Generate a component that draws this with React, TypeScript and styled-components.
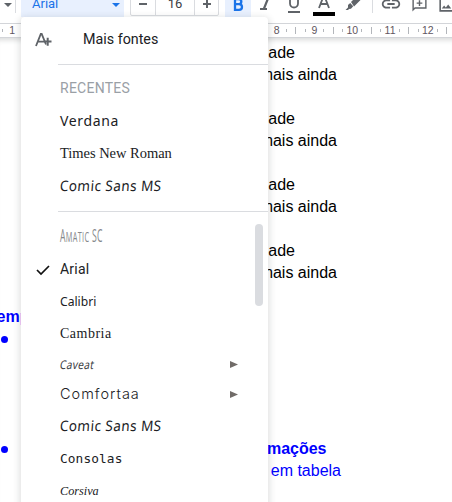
import React from "react";
import styled, { createGlobalStyle } from "styled-components";

const Global = createGlobalStyle`
  * { box-sizing: border-box; }
  body { margin: 0; background: #fff; overflow: hidden; }
`;

const Page = styled.main`
  position: relative;
  width: 452px;
  height: 502px;
  overflow: hidden;
  background: #fff;
`;

const Toolbar = styled.header`
  display: flex;
  height: 23px;
  overflow: hidden;
  font-family: Roboto, "Liberation Sans", sans-serif;
`;

const Tools = styled.div`
  display: flex;
  flex: none;
  height: 26px;
  margin-top: -9px;
`;

const Slot = styled.div<{ $w: number; $active?: boolean; $drop?: number }>`
  display: flex;
  flex: none;
  align-items: center;
  justify-content: center;
  width: ${(p) => p.$w}px;
  padding-top: ${(p) => p.$drop || 0}px;
  background: ${(p) => (p.$active ? "#e8f0fe" : "transparent")};
`;

const Separator = styled.div<{ $gap: number }>`
  flex: none;
  width: 1px;
  height: 22px;
  margin-right: ${(p) => p.$gap}px;
  background: #dadce0;
`;

const FontPicker = styled.div`
  display: flex;
  flex: none;
  align-items: center;
  justify-content: space-between;
  width: 103px;
  margin-right: 6px;
  padding: 0 4px 0 11px;
  background: #e8f0fe;
  color: #1a73e8;
  font-size: 14px;
  line-height: 26px;
`;

const PickerLabel = styled.span`
  font-size: 13px;
  margin-top: -1px;
`;

const CaretBox = styled.span`
  margin-top: 2px;
`;

const SizeStepper = styled.div`
  display: flex;
  flex: none;
  width: 89px;
  height: 25px;
  margin-right: 6px;
  border: 1px solid #dadce0;
  border-radius: 2px;
`;

const SizeValue = styled.span`
  flex: 1;
  border: solid #dadce0;
  border-width: 0 1px;
  color: #3c4043;
  font-size: 13px;
  line-height: 24px;
  text-align: center;
`;

const Icon = styled.svg`
  display: block;
  flex: none;
  overflow: visible;
`;

const Ruler = styled.div`
  display: flex;
  height: 15px;
  border: solid #d3d5d9;
  border-width: 1px 0;
  overflow: hidden;
`;

const RulerUnit = styled.div`
  display: grid;
  flex: none;
  grid-template-columns: repeat(4, 9.45px);
  align-items: center;
  justify-items: center;
  width: 37.8px;
  &:first-child { margin-left: -11.5px; }
`;

const Tick = styled.i<{ $h: number }>`
  width: 1px;
  height: ${(p) => p.$h}px;
  background: #b3b6bb;
`;

const Mark = styled.span`
  display: flex;
  justify-content: center;
  width: 9px;
  color: #5f5660;
  font: 10.5px/13px "Liberation Sans", sans-serif;
`;

const Doc = styled.article`
  display: grid;
  grid-template-columns: 21px 1fr;
  grid-auto-rows: 22px;
  height: 464px;
  padding-top: 4px;
  box-shadow: inset 0 6px 5px -4px rgba(60, 64, 67, 0.2);
  overflow: hidden;
  font: 16px/22px "Liberation Sans", sans-serif;
`;

const Margin = styled.div`
  display: flex;
  align-items: center;
  color: #00f;
  font-weight: bold;
  white-space: nowrap;
  text-indent: -3.5px;
`;

const Bullet = styled.i`
  width: 7px;
  height: 7px;
  margin: 1px 0 0 1px;
  border-radius: 50%;
  background: #00f;
`;

const Line = styled.p<{ $right: number; $blue?: boolean; $bold?: boolean }>`
  margin: 0;
  padding-right: ${(p) => 452 - p.$right}px;
  color: ${(p) => (p.$blue ? "#00f" : "#000")};
  font-weight: ${(p) => (p.$bold ? 700 : 400)};
  text-align: right;
  white-space: nowrap;
`;

const Menu = styled.nav`
  position: absolute;
  top: 17px;
  left: 21px;
  width: 247px;
  height: 500px;
  padding-top: 6px;
  border-radius: 4px;
  background: #fff;
  box-shadow: 0 2px 6px 2px rgba(60, 64, 67, 0.15);
`;

const MoreFonts = styled.div`
  display: flex;
  align-items: center;
  height: 32px;
  padding-left: 14px;
  color: #202124;
  font: 14.3px Roboto, sans-serif;
`;

const MoreLabel = styled.span`
  margin-left: 31px;
`;

const Divider = styled.hr<{ $top: number; $bottom: number }>`
  height: 1px;
  margin: ${(p) => p.$top}px 0 ${(p) => p.$bottom}px 37px;
  border: 0;
  background: #dadce0;
`;

const Row = styled.div<{ $h: number }>`
  display: grid;
  grid-template-columns: 39px 1fr 39px;
  align-items: center;
  height: ${(p) => p.$h}px;
  white-space: nowrap;
`;

const CheckCell = styled.span`
  grid-column: 1;
  padding: 3px 0 0 15px;
`;

const Face = styled.span<{
  $font: string; $size: number; $track?: number; $color?: string; $weight?: number;
  $italic?: boolean; $squeeze?: number; $skew?: number; $shift?: number;
}>`
  grid-column: 2;
  justify-self: start;
  color: ${(p) => p.$color || "#202124"};
  font-family: ${(p) => p.$font};
  font-size: ${(p) => p.$size}px;
  font-style: ${(p) => (p.$italic ? "italic" : "normal")};
  font-weight: ${(p) => p.$weight || 400};
  letter-spacing: ${(p) => p.$track || 0}px;
  line-height: 20px;
  transform: translateY(${(p) => p.$shift || 0}px) scaleX(${(p) => p.$squeeze || 1}) skewX(${(p) => p.$skew || 0}deg);
  transform-origin: left;
`;

const SmallCaps = styled.span`
  font-size: 0.85em;
`;

const ArrowCell = styled.span`
  grid-column: 3;
  padding-left: 1px;
`;

const Scrollbar = styled.div`
  position: absolute;
  top: 207px;
  right: 5px;
  width: 8px;
  height: 82px;
  border-radius: 4px;
  background: #dadce0;
`;

const Caret = ({ color }: { color: string }) => (
  <CaretBox><Icon width="8" height="4"><path d="M0 0h8L4 4z" fill={color} /></Icon></CaretBox>
);
const Glyph = ({ d, size = 20 }: { d: string; size?: number }) => (
  <Icon width={size} height={size} viewBox="0 0 24 24"><path d={d} fill="#5f6368" /></Icon>
);

const sans = '"Noto Sans", sans-serif';

type Entry = {
  name: string; h: number; font: string; size: number; track?: number; italic?: boolean; weight?: number;
  squeeze?: number; skew?: number; color?: string; checked?: boolean; more?: boolean; shift?: number;
};

const comic: Entry = { name: "Comic Sans MS", h: 32.5, font: sans, size: 14.5, squeeze: 0.93, track: 0.5, skew: -5, shift: -1 };

const recents: Entry[] = [
  { name: "Verdana", h: 32.5, font: sans, size: 14, track: 0.65 },
  { name: "Times New Roman", h: 32.5, font: '"Liberation Serif", serif', size: 14.5, track: -0.03 },
  comic,
];

const fonts: Entry[] = [
  { name: "Amatic SC", h: 32.5, font: '"Open Sans", sans-serif', size: 18, squeeze: 0.48, weight: 400, track: 0.7, color: "#85878b", shift: -1 },
  { name: "Arial", h: 32.5, font: "Roboto, sans-serif", size: 14, track: 0.2, checked: true },
  { name: "Calibri", h: 32.5, font: sans, size: 12.5, squeeze: 0.97, shift: 1 },
  { name: "Cambria", h: 32.5, font: '"Liberation Serif", serif', size: 14, track: 0.5 },
  { name: "Caveat", h: 29.5, font: sans, size: 12, squeeze: 0.85, track: 0.3, skew: -12, more: true, color: "#3c4043" },
  { name: "Comfortaa", h: 30.5, font: "Inter, sans-serif", size: 14.5, weight: 300, track: 1, more: true, shift: -1 },
  comic,
  { name: "Consolas", h: 32.5, font: '"DejaVu Sans Mono", monospace', size: 12.8, track: 0.1 },
  { name: "Corsiva", h: 32.5, font: '"Liberation Serif", serif', size: 13, squeeze: 0.94, italic: true },
];

const FontRow = ({ e }: { e: Entry }) => (
  <Row $h={e.h}>
    {e.checked && (
      <CheckCell>
        <Icon width="14" height="10"><path d="M1 5 5 9 13 1" fill="none" stroke="#111" strokeWidth="1.7" /></Icon>
      </CheckCell>
    )}
    <Face
      $font={e.font} $size={e.size} $track={e.track} $italic={e.italic} $squeeze={e.squeeze}
      $color={e.color} $shift={e.shift} $skew={e.skew} $weight={e.weight}
    >
      {e.name === "Amatic SC" ? <>A<SmallCaps>MATIC</SmallCaps> SC</> : e.name}
    </Face>
    {e.more && (
      <ArrowCell>
        <Icon width="8" height="7"><path d="M0 0 8 3.5 0 7z" fill="#706b68" /></Icon>
      </ArrowCell>
    )}
  </Row>
);

const blocks = [0, 1, 2, 3];

export default function App() {
  return (
    <Page>
      <Global />
      <Toolbar>
        <Tools>
          <Slot $w={15}><Slot $w={19}><Caret color="#5f6368" /></Slot></Slot>
          <Separator $gap={5} />
          <FontPicker><PickerLabel>Arial</PickerLabel><Caret color="#1a73e8" /></FontPicker>
          <SizeStepper>
            <Slot $w={24}><Icon width="8" height="2"><path d="M0 0h8v2H0z" fill="#5f6368" /></Icon></Slot>
            <SizeValue>16</SizeValue>
            <Slot $w={23}><Icon width="8" height="8"><path d="M0 3h3V0h2v3h3v2H5v3H3V5H0z" fill="#5f6368" /></Icon></Slot>
          </SizeStepper>
          <Slot $w={26} $active>
            <Icon width="11" height="13" viewBox="0 0 11 13"><path d="M2 1.2h3.6q2.7 0 2.7 2.5T5.6 6.2H2h4q3 0 3 2.8t-3 2.8H2z" fill="none" stroke="#1a73e8" strokeWidth="2.3" /></Icon>
          </Slot>
          <Slot $w={28}><Icon width="11" height="12"><path d="M4 0h7v2H8.6L5.4 10H7v2H0v-2h3L6.200 2H4z" fill="#5f6368" /></Icon></Slot>
          <Slot $w={30} $drop={2}><Icon width="12" height="16"><path d="M2-1v7.500a4 4 0 0 0 8 0V-1M0 15h12" fill="none" stroke="#5f6368" strokeWidth="1.800" /></Icon></Slot>
          <Slot $w={29}><Icon width="22" height="20"><path d="M6 14 10.600 2h.8L16 14M7.800 10h6.400" fill="none" stroke="#5f6368" strokeWidth="1.800" /><path d="M0 18h22v4H0z" fill="#000" /></Icon></Slot>
          <Slot $w={30} $drop={2}>
            <Icon width="14" height="14"><path d="M5 4 10-1h2.500L15 1.500 8 8.500zM4.200 5l3 3.300-2.200 2.500-2 .2-1 1H-.5L2 9.500V7z" fill="#5f6368" /></Icon>
          </Slot>
          <Slot $w={4} />
          <Separator $gap={7} />
          <Slot $w={22}><Glyph size={22} d="M3.900 12c0-1.710 1.390-3.100 3.100-3.100h4V7H7c-2.760 0-5 2.240-5 5s2.240 5 5 5h4v-1.900H7c-1.710 0-3.100-1.390-3.100-3.100zM8 13h8v-2H8v2zm9-6h-4v1.900h4c1.710 0 3.100 1.390 3.100 3.100s-1.390 3.100-3.100 3.100h-4V17h4c2.760 0 5-2.240 5-5s-2.240-5-5-5z" /></Slot>
          <Slot $w={34}><Glyph size={17} d="M22 2H2v20l4-4h16V2zm-2 14H5.200L4 17.200V4h16v12zM11 14h2v-3h3V9h-3V6h-2v3H8v2h3z" /></Slot>
          <Slot $w={20}><Glyph size={19} d="M19 5v14H5V5h14m2-2H3v18h18V3zm-6.860 8.860-3 3.870L9 13.140 6 17h12l-3.860-5.140z" /></Slot>
        </Tools>
      </Toolbar>
      <Ruler>
        {Array.from({ length: 13 }, (_, i) => (
          <RulerUnit key={i}>
            <Tick $h={7} /><Tick $h={3} />{i === 12 ? <Tick $h={3} /> : <Mark>{i + 1}</Mark>}<Tick $h={3} />
          </RulerUnit>
        ))}
      </Ruler>
      <Doc>
        {blocks.map((b) => (
          <React.Fragment key={b}>
            <Margin /><Line $right={295}>ade</Line>
            <Margin /><Line $right={337}>mais ainda</Line>
            {b < 3 && <><Margin /><Line $right={337} /></>}
          </React.Fragment>
        ))}
        <Margin /><Line $right={337} />
        <Margin>emp</Margin><Line $right={337} />
        <Margin><Bullet /></Margin><Line $right={337} />
        {blocks.map((b) => <React.Fragment key={b}><Margin /><Line $right={337} /></React.Fragment>)}
        <Margin><Bullet /></Margin><Line $right={326.5} $blue $bold>mações</Line>
        <Margin /><Line $right={341} $blue>em tabela</Line>
      </Doc>
      <Menu>
        <MoreFonts>
          <Icon width="17" height="14"><path d="M1 14 5.800 2h.9L11 12.500M3 9.700h6" fill="none" stroke="#5f6368" strokeWidth="1.800" /><path d="M9 9.500h7.500M12.700 5.800v8" fill="none" stroke="#5f6368" strokeWidth="2" /></Icon>
          <MoreLabel>Mais fontes</MoreLabel>
        </MoreFonts>
        <Divider $top={9} $bottom={7} />
        <FontRow e={{ name: "RECENTES", h: 32.5, font: "Roboto, sans-serif", size: 14, track: 0.25, color: "#9aa0a6" }} />
        {recents.map((e) => <FontRow key={e.name} e={e} />)}
        <Divider $top={9} $bottom={8} />
        {fonts.map((e) => <FontRow key={e.name} e={e} />)}
        <Scrollbar />
      </Menu>
    </Page>
  );
}
